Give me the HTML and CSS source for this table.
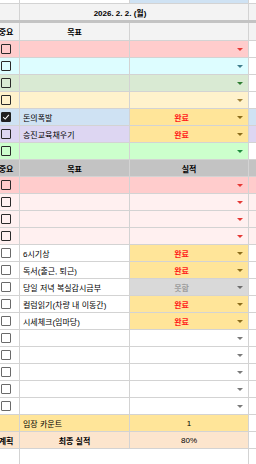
FILE: index.html
```html
<!DOCTYPE html>
<html lang="ko">
<head>
<meta charset="utf-8">
<link rel="stylesheet" href="styles.css">
</head>
<body>
<div class="sheet">
  <div class="row top"><div class="cell a"></div><div class="cell b"></div><div class="cell c topc"></div><div class="cell d"></div></div>
  <div class="row date"><div class="cell a"></div><div class="cell bc">2026. 2. 2. (월)</div><div class="cell d"></div></div>
  <div class="bar"></div>
  <div class="row head"><div class="cell a hd">중요</div><div class="cell b hd ctr">목표</div><div class="cell c"></div><div class="cell d"></div></div>

  <div class="row pink"><div class="cell a"><span class="box"></span></div><div class="cell b"></div><div class="cell c"><span class="v"></span><i class="dd"></i></div><div class="cell d"></div></div>
  <div class="row cyan"><div class="cell a"><span class="box"></span></div><div class="cell b"></div><div class="cell c"><span class="v"></span><i class="dd"></i></div><div class="cell d"></div></div>
  <div class="row sage"><div class="cell a"><span class="box"></span></div><div class="cell b"></div><div class="cell c"><span class="v"></span><i class="dd"></i></div><div class="cell d"></div></div>
  <div class="row cream"><div class="cell a"><span class="box"></span></div><div class="cell b"></div><div class="cell c"><span class="v"></span><i class="dd"></i></div><div class="cell d"></div></div>
  <div class="row blue tint"><div class="cell a"><span class="box on"><svg viewBox="0 0 10 10" width="8" height="8"><path d="M1.5 5.2 L4 7.6 L8.6 2.4" fill="none" stroke="#fff" stroke-width="1.3"/></svg></span></div><div class="cell b">돈의폭발</div><div class="cell c done"><span class="v">완료</span><i class="dd"></i></div><div class="cell d"></div></div>
  <div class="row lav tint"><div class="cell a"><span class="box"></span></div><div class="cell b">승진교육채우기</div><div class="cell c done"><span class="v">완료</span><i class="dd"></i></div><div class="cell d"></div></div>
  <div class="row mint"><div class="cell a"><span class="box"></span></div><div class="cell b"></div><div class="cell c"><span class="v"></span><i class="dd"></i></div><div class="cell d"></div></div>

  <div class="row ghead"><div class="cell a hd">중요</div><div class="cell b hd ctr">목표</div><div class="cell c hd ctr">실적</div><div class="cell d"></div></div>

  <div class="row pink tint"><div class="cell a"><span class="box"></span></div><div class="cell b"></div><div class="cell c"><span class="v"></span><i class="dd"></i></div><div class="cell d"></div></div>
  <div class="row blush"><div class="cell a"><span class="box"></span></div><div class="cell b"></div><div class="cell c"><span class="v"></span><i class="dd"></i></div><div class="cell d"></div></div>
  <div class="row blush"><div class="cell a"><span class="box"></span></div><div class="cell b"></div><div class="cell c"><span class="v"></span><i class="dd"></i></div><div class="cell d"></div></div>
  <div class="row blush"><div class="cell a"><span class="box"></span></div><div class="cell b"></div><div class="cell c"><span class="v"></span><i class="dd"></i></div><div class="cell d"></div></div>

  <div class="row plain"><div class="cell a"><span class="box"></span></div><div class="cell b">6시기상</div><div class="cell c done"><span class="v">완료</span><i class="dd"></i></div><div class="cell d"></div></div>
  <div class="row plain"><div class="cell a"><span class="box"></span></div><div class="cell b">독서(출근, 퇴근)</div><div class="cell c done"><span class="v">완료</span><i class="dd"></i></div><div class="cell d"></div></div>
  <div class="row plain"><div class="cell a"><span class="box"></span></div><div class="cell b">당일 저녁 복실감시금부</div><div class="cell c miss"><span class="v">못함</span><i class="dd"></i></div><div class="cell d"></div></div>
  <div class="row plain"><div class="cell a"><span class="box"></span></div><div class="cell b">컬럼읽기(차량 내 이동간)</div><div class="cell c done"><span class="v">완료</span><i class="dd"></i></div><div class="cell d"></div></div>
  <div class="row plain"><div class="cell a"><span class="box"></span></div><div class="cell b">시세체크(임마당)</div><div class="cell c done"><span class="v">완료</span><i class="dd"></i></div><div class="cell d"></div></div>
  <div class="row plain"><div class="cell a"><span class="box"></span></div><div class="cell b"></div><div class="cell c"><span class="v"></span><i class="dd"></i></div><div class="cell d"></div></div>
  <div class="row plain"><div class="cell a"><span class="box"></span></div><div class="cell b"></div><div class="cell c"><span class="v"></span><i class="dd"></i></div><div class="cell d"></div></div>
  <div class="row plain"><div class="cell a"><span class="box"></span></div><div class="cell b"></div><div class="cell c"><span class="v"></span><i class="dd"></i></div><div class="cell d"></div></div>
  <div class="row plain"><div class="cell a"><span class="box"></span></div><div class="cell b"></div><div class="cell c"><span class="v"></span><i class="dd"></i></div><div class="cell d"></div></div>
  <div class="row plain"><div class="cell a"><span class="box"></span></div><div class="cell b"></div><div class="cell c"><span class="v"></span><i class="dd"></i></div><div class="cell d"></div></div>

  <div class="row count"><div class="cell a"></div><div class="cell b">임장 카운트</div><div class="cell c ctr">1</div><div class="cell d"></div></div>
  <div class="row final"><div class="cell a hd">계획</div><div class="cell b hd ctr">최종 실적</div><div class="cell c ctr">80%</div><div class="cell d"></div></div>
  <div class="row tail"><div class="cell a"></div><div class="cell bc"></div><div class="cell d"></div></div>
</div>
</body>
</html>
```
FILE: styles.css
```css
* { box-sizing: border-box; }
html, body { margin: 0; padding: 0; }
body {
  width: 256px;
  height: 464px;
  overflow: hidden;
  background: #fff;
  font-family: "Liberation Sans", "Noto Sans CJK KR", sans-serif;
  font-size: 8px;
  color: #000;
}
.sheet { display: flex; flex-direction: column; }
.row {
  --bg: #fff;
  --dbg: #fff;
  --ar: #7a7a7a;
  --bx: #5c5c5c;
  display: grid;
  grid-template-columns: 20px 110px 119px 7px;
  height: 17px;
  flex: none;
}
.cell {
  background: var(--bg);
  border-right: 1px solid #d3d3d3;
  border-bottom: 1px solid #d3d3d3;
  display: flex;
  align-items: center;
  overflow: hidden;
  min-width: 0;
  white-space: nowrap;
}
.cell.d { background: var(--dbg); border-right: none; }
.a { justify-content: center; padding-right: 7px; }
.b { padding-left: 3px; }
.ctr { justify-content: center; padding-left: 0; }
.hd { font-weight: 700; }

.top { height: 4px; }
.topc { background: #cfe2f3; }
.date { height: 16px; --bg: #f3f3f3; --dbg: #f3f3f3; grid-template-columns: 20px 229px 7px; }
.date .cell { border-bottom: none; }
.date .bc { justify-content: center; padding-right: 28px; font-weight: 700; overflow: visible; }
.bar { height: 3px; background: #c3c3c3; flex: none; }
.head { height: 18px; --bg: #f3f3f3; --dbg: #f3f3f3; }

.box {
  width: 10px;
  height: 10px;
  border: 1.5px solid var(--bx);
  border-radius: 1px;
  flex: none;
  display: flex;
  align-items: center;
  justify-content: center;
}
.box.on { background: #1f1f1f; border-color: #1f1f1f; }

.c .v { flex: 1; text-align: center; }
.dd {
  width: 0;
  height: 0;
  border-left: 3px solid transparent;
  border-right: 3px solid transparent;
  border-top: 3px solid var(--ar);
  margin: 0 5px 0 4px;
  flex: none;
}
.c.done { background: #ffe599; --ar: #8b6d1c; }
.c.done .v { color: #ff1a1a; font-weight: 700; }
.c.miss { background: #d9d9d9; --ar: #6e6e6e; }
.c.miss .v { color: #9e9e9e; font-weight: 700; }

.pink { --bg: #ffcccc; --ar: #e53935; --bx: #2a2a2a; }
.cyan { --bg: #ddfdff; --ar: #3f7d8c; --bx: #2a2a2a; }
.sage { --bg: #d9ead3; --ar: #2e7d32; --bx: #2a2a2a; }
.cream { --bg: #fff2cc; --ar: #a0823a; --bx: #2a2a2a; }
.blue { --bg: #cfe2f3; --bx: #2a2a2a; }
.lav { --bg: #ddd6f2; --bx: #2a2a2a; }
.mint { --bg: #ccffcc; --ar: #1e8e3e; --bx: #2a2a2a; }
.tint { --dbg: var(--bg); }
.ghead { --bg: #c3c3c3; --dbg: #c3c3c3; }
.blush { --bg: #fff0f0; --dbg: #fff0f0; --ar: #e53935; --bx: #2a2a2a; }
.plain { --bx: #6a6a6a; }
.count { --bg: #ffe599; }
.final { --bg: #fce5cd; }
.tail { grid-template-columns: 20px 229px 7px; }
.tail .cell { border-bottom: none; }
```
